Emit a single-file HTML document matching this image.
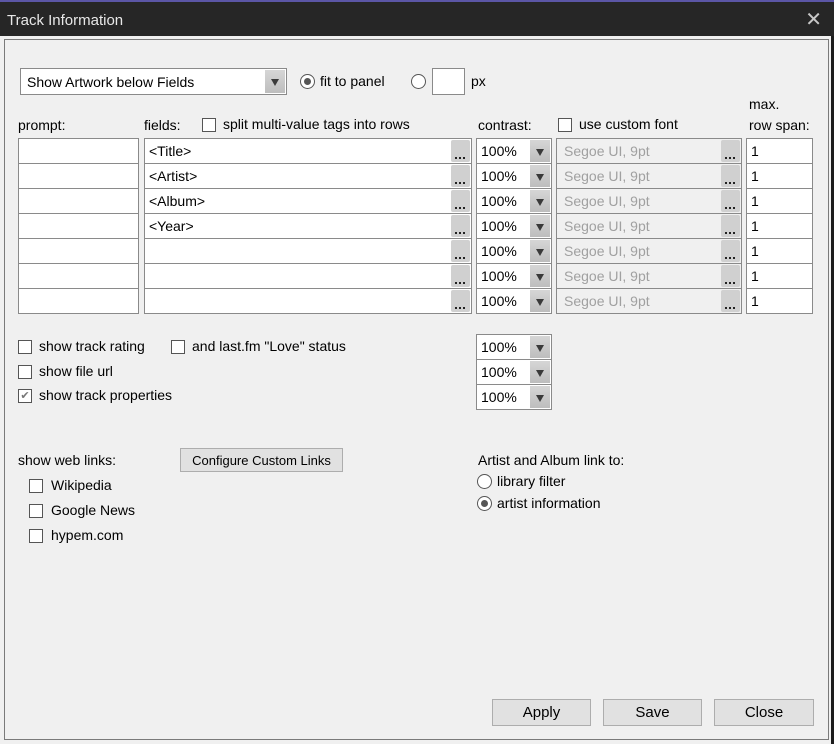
<!DOCTYPE html>
<html><head><meta charset="utf-8"><style>
*{box-sizing:border-box;margin:0;padding:0}
body{width:834px;height:744px;background:#1c1c1c;font-family:"Liberation Sans",sans-serif;font-size:14px;color:#000;position:relative;overflow:hidden}
.a{position:absolute}
#title{left:0;top:0;width:834px;height:36px;background:#262626;border-top:2px solid #5b56a6;color:#e8e8e8;font-size:15px;padding:10px 0 0 7px}
#x{right:12px;top:7px;color:#c8c8c8;font-size:20px}
#win{left:0;top:36px;width:831px;height:708px;background:#f0f0f0}
#frame{left:4px;top:39px;width:825px;height:701px;border:1px solid #7a7a7a}
.box{position:absolute;border:1px solid #8a8a8a;background:#fff;height:26px;padding:4px 0 0 4px;white-space:nowrap}
.dis{background:#f0f0f0;color:#a0a0a0}
.dots{position:absolute;top:1px;right:1px;width:19px;height:22px;background:#d0d0d0;border-radius:2px}
.dots:after{content:"";position:absolute;left:4px;bottom:3px;width:2px;height:2px;background:#222;box-shadow:4px 0 #222,8px 0 #222}
.arr{position:absolute;top:1px;right:1px;width:20px;height:22px;background:linear-gradient(#d6d6d6,#bdbdbd)}
.arr:after{content:"";position:absolute;left:5px;top:8px;border-left:5px solid transparent;border-right:5px solid transparent;border-top:8px solid #333}
.arr:after{left:6px;top:9px;border-left-width:4px;border-right-width:4px;border-top:7px solid #3a3a3a}
.cb{position:absolute;width:14px;height:14px;border:1px solid #555;background:#fff}
.rb{position:absolute;width:15px;height:15px;border:1px solid #555;border-radius:50%;background:#fff}
.rb.on:after{content:"";position:absolute;left:3px;top:3px;width:7px;height:7px;border-radius:50%;background:#555}
.t{position:absolute;white-space:nowrap}
.btn{position:absolute;border:1px solid #adadad;background:#e1e1e1;text-align:center;font-size:14px;padding-top:4px}
</style></head><body>
<div id="title" class="a">Track Information</div>
<div id="x" class="a">✕</div>
<div id="win" class="a"></div>
<div id="frame" class="a"></div>

<div class="box" style="left:20px;top:68px;width:267px;height:27px;padding-top:5px;padding-left:6px">Show Artwork below Fields<div class="arr" style="height:23px"></div></div>
<div class="rb on" style="left:300px;top:74px"></div><div class="t" style="left:320px;top:73px">fit to panel</div>
<div class="rb" style="left:411px;top:74px"></div>
<div class="box" style="left:432px;top:68px;width:33px;height:27px"></div>
<div class="t" style="left:471px;top:73px">px</div>

<div class="t" style="left:18px;top:117px">prompt:</div>
<div class="t" style="left:144px;top:117px">fields:</div>
<div class="cb" style="left:202px;top:118px"></div><div class="t" style="left:223px;top:116px">split multi-value tags into rows</div>
<div class="t" style="left:478px;top:117px">contrast:</div>
<div class="cb" style="left:558px;top:118px"></div><div class="t" style="left:579px;top:116px">use custom font</div>
<div class="t" style="left:749px;top:96px">max.</div>
<div class="t" style="left:749px;top:117px">row span:</div>

<div id="rows"></div>

<div class="cb" style="left:18px;top:340px"></div><div class="t" style="left:39px;top:338px">show track rating</div>
<div class="cb" style="left:171px;top:340px"></div><div class="t" style="left:192px;top:338px">and last.fm "Love" status</div>
<div class="cb" style="left:18px;top:365px"></div><div class="t" style="left:39px;top:363px">show file url</div>
<div class="cb" style="left:18px;top:389px;color:#777;font-size:11px;line-height:12px;text-align:center">✔</div><div class="t" style="left:39px;top:387px">show track properties</div>
<div class="box" style="left:476px;top:334px;width:76px">100%<div class="arr"></div></div>
<div class="box" style="left:476px;top:359px;width:76px">100%<div class="arr"></div></div>
<div class="box" style="left:476px;top:384px;width:76px">100%<div class="arr"></div></div>

<div class="t" style="left:18px;top:452px">show web links:</div>
<div class="btn" style="left:180px;top:448px;width:163px;height:24px;font-size:13px">Configure Custom Links</div>
<div class="cb" style="left:29px;top:479px"></div><div class="t" style="left:51px;top:477px">Wikipedia</div>
<div class="cb" style="left:29px;top:504px"></div><div class="t" style="left:51px;top:502px">Google News</div>
<div class="cb" style="left:29px;top:529px"></div><div class="t" style="left:51px;top:527px">hypem.com</div>

<div class="t" style="left:478px;top:452px">Artist and Album link to:</div>
<div class="rb" style="left:477px;top:474px"></div><div class="t" style="left:497px;top:473px">library filter</div>
<div class="rb on" style="left:477px;top:496px"></div><div class="t" style="left:497px;top:495px">artist information</div>

<div class="btn" style="left:492px;top:699px;width:99px;height:27px;font-size:15px">Apply</div>
<div class="btn" style="left:603px;top:699px;width:99px;height:27px;font-size:15px">Save</div>
<div class="btn" style="left:714px;top:699px;width:100px;height:27px;font-size:15px">Close</div>

<script>
var f=["&lt;Title&gt;","&lt;Artist&gt;","&lt;Album&gt;","&lt;Year&gt;","","",""],h="";
for(var i=0;i<7;i++){var y=138+25*i;
h+='<div class="box" style="left:18px;top:'+y+'px;width:121px"></div>';
h+='<div class="box" style="left:144px;top:'+y+'px;width:328px">'+f[i]+'<div class="dots"></div></div>';
h+='<div class="box" style="left:476px;top:'+y+'px;width:76px">100%<div class="arr"></div></div>';
h+='<div class="box dis" style="left:556px;top:'+y+'px;width:186px;padding-left:7px">Segoe UI, 9pt<div class="dots"></div></div>';
h+='<div class="box" style="left:746px;top:'+y+'px;width:67px">1</div>';}
document.getElementById("rows").innerHTML=h;
</script>
</body></html>
